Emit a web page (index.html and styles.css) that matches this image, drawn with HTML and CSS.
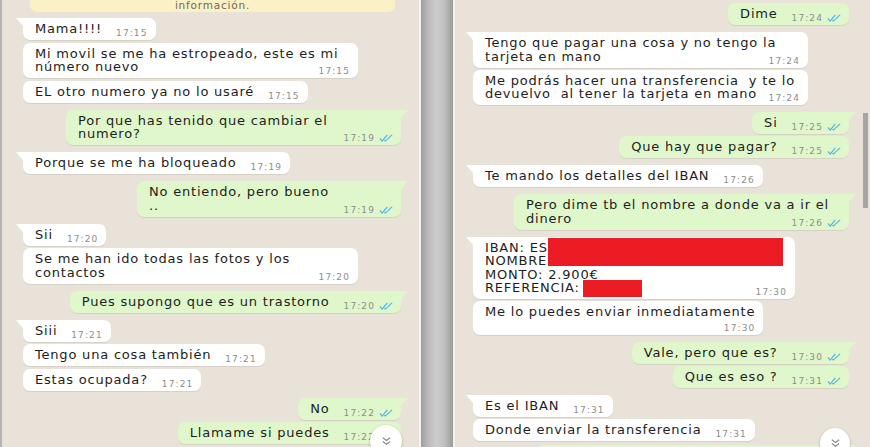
FILE: index.html
```html
<!DOCTYPE html>
<html lang="es">
<head>
<meta charset="utf-8">
<title>Chat</title>
<link rel="stylesheet" href="styles.css">
</head>
<body>
<div class="screen">
  <section class="chat chat-left">
    <div class="notice">información.</div>

    <div class="msg in tail first">Mama!!!!<span class="meta"><span class="time">17:15</span></span></div>
    <div class="msg in full">Mi movil se me ha estropeado, este es mi<br>número nuevo<span class="meta"><span class="time">17:15</span></span></div>
    <div class="msg in">EL otro numero ya no lo usaré<span class="meta"><span class="time">17:15</span></span></div>

    <div class="msg out tail g full">Por que has tenido que cambiar el<br>numero?<span class="meta"><span class="time">17:19</span><svg class="ticks" viewBox="0 0 16 9"><path d="M1 5l2.6 3L9.5 1M6.2 7l1 1L15 1"/></svg></span></div>

    <div class="msg in tail g">Porque se me ha bloqueado<span class="meta"><span class="time">17:19</span></span></div>

    <div class="msg out tail g w264">No entiendo, pero bueno<br>..<span class="meta"><span class="time">17:19</span><svg class="ticks" viewBox="0 0 16 9"><path d="M1 5l2.6 3L9.5 1M6.2 7l1 1L15 1"/></svg></span></div>

    <div class="msg in tail g">Sii<span class="meta"><span class="time">17:20</span></span></div>
    <div class="msg in full">Se me han ido todas las fotos y los<br>contactos<span class="meta"><span class="time">17:20</span></span></div>

    <div class="msg out tail g">Pues supongo que es un trastorno<span class="meta"><span class="time">17:20</span><svg class="ticks" viewBox="0 0 16 9"><path d="M1 5l2.6 3L9.5 1M6.2 7l1 1L15 1"/></svg></span></div>

    <div class="msg in tail g">Siii<span class="meta"><span class="time">17:21</span></span></div>
    <div class="msg in">Tengo una cosa también<span class="meta"><span class="time">17:21</span></span></div>
    <div class="msg in">Estas ocupada?<span class="meta"><span class="time">17:21</span></span></div>

    <div class="msg out tail g">No<span class="meta"><span class="time">17:22</span><svg class="ticks" viewBox="0 0 16 9"><path d="M1 5l2.6 3L9.5 1M6.2 7l1 1L15 1"/></svg></span></div>
    <div class="msg out">Llamame si puedes<span class="meta"><span class="time">17:22</span><svg class="ticks" viewBox="0 0 16 9"><path d="M1 5l2.6 3L9.5 1M6.2 7l1 1L15 1"/></svg></span></div>

    <div class="scroll-btn scroll-left"><svg viewBox="0 0 12 10"><path d="M2 1.5l4 3 4-3M2 5.5l4 3 4-3"/></svg></div>
  </section>

  <div class="divider"></div>

  <section class="chat chat-right">
    <div class="msg out first">Dime<span class="meta"><span class="time">17:24</span><svg class="ticks" viewBox="0 0 16 9"><path d="M1 5l2.6 3L9.5 1M6.2 7l1 1L15 1"/></svg></span></div>

    <div class="msg in tail g full">Tengo que pagar una cosa y no tengo la<br>tarjeta en mano<span class="meta"><span class="time">17:24</span></span></div>
    <div class="msg in full">Me podrás hacer una transferencia&nbsp; y te lo<br>devuelvo&nbsp; al tener la tarjeta en mano<span class="meta tight"><span class="time">17:24</span></span></div>

    <div class="msg out tail g">Si<span class="meta"><span class="time">17:25</span><svg class="ticks" viewBox="0 0 16 9"><path d="M1 5l2.6 3L9.5 1M6.2 7l1 1L15 1"/></svg></span></div>
    <div class="msg out">Que hay que pagar?<span class="meta"><span class="time">17:25</span><svg class="ticks" viewBox="0 0 16 9"><path d="M1 5l2.6 3L9.5 1M6.2 7l1 1L15 1"/></svg></span></div>

    <div class="msg in tail g">Te mando los detalles del IBAN<span class="meta"><span class="time">17:26</span></span></div>

    <div class="msg out tail g full">Pero dime tb el nombre a donde va a ir el<br>dinero<span class="meta"><span class="time">17:26</span><svg class="ticks" viewBox="0 0 16 9"><path d="M1 5l2.6 3L9.5 1M6.2 7l1 1L15 1"/></svg></span></div>

    <div class="msg in tail g iban">IBAN: ES<br>NOMBRE :<br>MONTO: 2.900€<br>REFERENCIA:<span class="meta"><span class="time">17:30</span></span><span class="redact redact-1"></span><span class="redact redact-2"></span></div>
    <div class="msg in">Me lo puedes enviar inmediatamente<br><span class="meta below"><span class="time">17:30</span></span></div>

    <div class="msg out tail g">Vale, pero que es?<span class="meta"><span class="time">17:30</span><svg class="ticks" viewBox="0 0 16 9"><path d="M1 5l2.6 3L9.5 1M6.2 7l1 1L15 1"/></svg></span></div>
    <div class="msg out">Que es eso ?<span class="meta"><span class="time">17:31</span><svg class="ticks" viewBox="0 0 16 9"><path d="M1 5l2.6 3L9.5 1M6.2 7l1 1L15 1"/></svg></span></div>

    <div class="msg in tail g">Es el IBAN<span class="meta"><span class="time">17:31</span></span></div>
    <div class="msg in">Donde enviar la transferencia<span class="meta"><span class="time">17:31</span></span></div>

    <div class="msg out tail stub"></div>

    <div class="scrollbar"></div>
    <div class="scroll-btn scroll-right"><svg viewBox="0 0 12 10"><path d="M2 1.5l4 3 4-3M2 5.5l4 3 4-3"/></svg></div>
  </section>
</div>
</body>
</html>
```

FILE: styles.css
```css
* { box-sizing: border-box; }

html, body {
  margin: 0;
  padding: 0;
}

body {
  width: 870px;
  height: 447px;
  overflow: hidden;
  background: #ffffff;
  font-family: "DejaVu Sans", "Noto Sans", sans-serif;
}

.screen {
  display: flex;
  height: 447px;
}

.chat {
  position: relative;
  overflow: hidden;
  height: 447px;
  background: #e9e2d8;
  display: flex;
  flex-direction: column;
  align-items: flex-start;
}

.chat-left {
  width: 421px;
  flex: none;
  border-left: 2px solid #b5b5b5;
  border-right: 2px solid #f2f2f2;
  padding: 0 18px 0 21px;
}

.divider {
  width: 32px;
  flex: none;
  background: linear-gradient(90deg, #9d9d9d 0%, #bdbdbd 25%, #cdcdcd 50%, #bdbdbd 75%, #9b9b9b 100%);
}

.chat-right {
  flex: 1;
  border-left: 2px solid #f2f2f2;
  padding: 3px 21px 0 18px;
}

.notice {
  align-self: stretch;
  flex: none;
  margin: 0 6px 6px 7px;
  height: 12px;
  background: #fcf1c6;
  border-radius: 0 0 7px 7px;
  color: #6f6a5a;
  font-size: 10.5px;
  line-height: 10px;
  letter-spacing: 0.8px;
  text-align: center;
}

.msg {
  position: relative;
  flex: none;
  display: flow-root;
  margin-top: 2px;
  padding: 4px 8px 4px 12px;
  border-radius: 7px;
  font-size: 13px;
  line-height: 13.5px;
  letter-spacing: 0.8px;
  color: #1d1d1d;
  white-space: nowrap;
  box-shadow: 0 1px 0.5px rgba(0, 0, 0, 0.08);
}

.chat-left .msg { margin-top: 2.5px; }

.msg.first,
.chat-left .msg.first { margin-top: 0; }

.msg.g,
.chat-left .msg.g { margin-top: 7px; }

.in {
  align-self: flex-start;
  background: #ffffff;
}

.out {
  align-self: flex-end;
  background: #e0f7cb;
}

.full { width: 335px; }
.w264 { width: 264px; }
.iban { width: 322px; }

.msg.stub {
  width: 312px;
  height: 30px;
  margin-top: 4px;
}

.tail.in { border-top-left-radius: 0; }
.tail.out { border-top-right-radius: 0; }

.tail.in::before {
  content: "";
  position: absolute;
  top: 0;
  left: -7px;
  width: 0;
  height: 0;
  border-right: 7px solid #ffffff;
  border-bottom: 8px solid transparent;
}

.tail.out::before {
  content: "";
  position: absolute;
  top: 0;
  right: -7px;
  width: 0;
  height: 0;
  border-left: 7px solid #e0f7cb;
  border-bottom: 8px solid transparent;
}

.meta {
  float: right;
  display: flex;
  align-items: center;
  gap: 4px;
  margin: 5px 0 -3px 14px;
  height: 12px;
  font-size: 9px;
  line-height: 12px;
  letter-spacing: 1.1px;
  color: #8d8d8d;
}

.meta.tight { margin-left: 8px; }
.meta.below { margin-top: 3px; }

.ticks {
  width: 14px;
  height: 8px;
  fill: none;
  stroke: #4cb3ea;
  stroke-width: 1.3;
}

.redact {
  position: absolute;
  background: #ec1c24;
}

.redact-1 {
  left: 75px;
  top: 1px;
  width: 235px;
  height: 28px;
}

.redact-2 {
  left: 110px;
  top: 43px;
  width: 59px;
  height: 17px;
}

.scroll-btn {
  position: absolute;
  border-radius: 50%;
  background: #ffffff;
  box-shadow: 0 1px 3px rgba(0, 0, 0, 0.25);
  display: flex;
  align-items: center;
  justify-content: center;
}

.scroll-btn svg {
  width: 11px;
  height: 10px;
  fill: none;
  stroke: #8a8a8a;
  stroke-width: 1.3;
}

.scroll-left {
  right: 17px;
  top: 425px;
  width: 32px;
  height: 32px;
}

.scroll-right {
  right: 20px;
  top: 428px;
  width: 30px;
  height: 30px;
}

.scrollbar {
  position: absolute;
  right: 2px;
  top: 113px;
  width: 5px;
  height: 95px;
  background: #a5a5a5;
}
```
